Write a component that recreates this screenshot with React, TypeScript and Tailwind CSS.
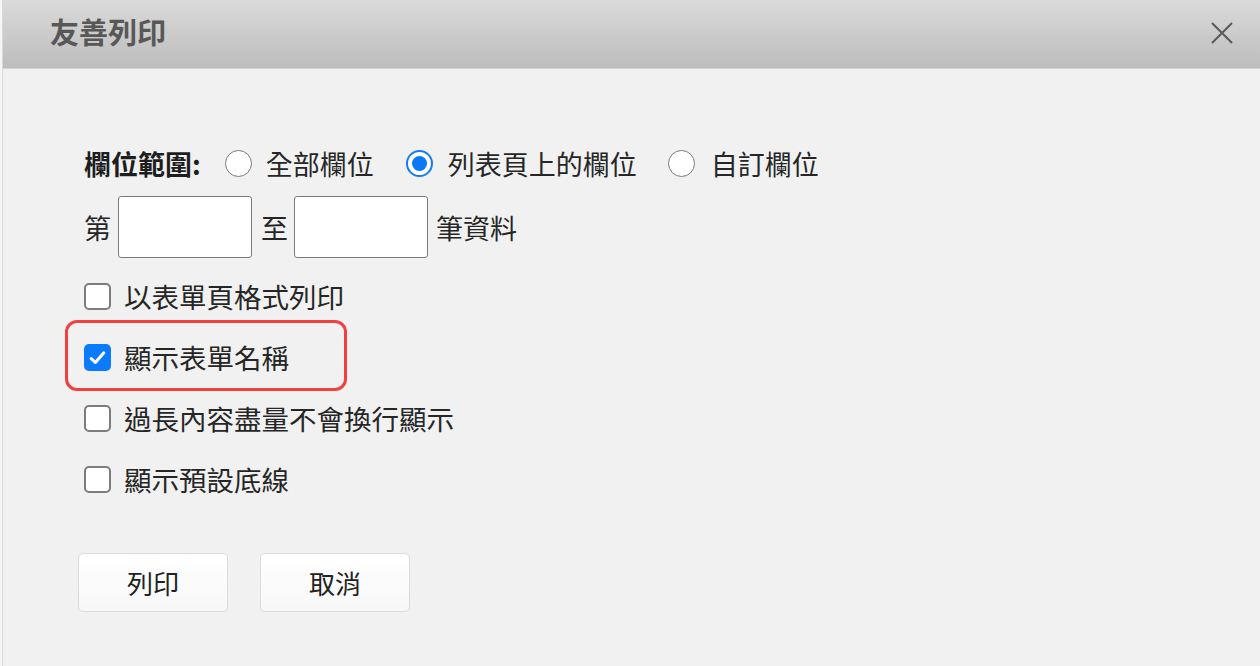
import React from "react";

const font = { fontFamily: '"Noto Sans CJK TC", "Noto Sans", sans-serif' };

function Radio({ checked }: { checked?: boolean }) {
  return checked ? (
    <span className="flex h-[27px] w-[27px] shrink-0 items-center justify-center rounded-full border-[2.5px] border-[#1779f6] bg-white">
      <span className="h-[15px] w-[15px] rounded-full bg-[#0d78f7]" />
    </span>
  ) : (
    <span className="h-[27px] w-[27px] shrink-0 rounded-full border-[1.5px] border-[#7a7a7a] bg-white" />
  );
}

function Checkbox({ checked }: { checked?: boolean }) {
  return checked ? (
    <span className="flex h-[27px] w-[27px] shrink-0 items-center justify-center rounded-[5px] bg-[#0b7bfb]">
      <svg width="21" height="21" viewBox="0 0 16 16" fill="none">
        <path d="M3.2 8.8 L6.4 11.8 L12.8 4.4" stroke="white" strokeWidth="2.3" strokeLinecap="round" strokeLinejoin="round" />
      </svg>
    </span>
  ) : (
    <span className="h-[27px] w-[27px] shrink-0 rounded-[5px] border-[2px] border-[#7c7c7c] bg-white" />
  );
}

function CheckRow({ label, checked, highlight }: { label: string; checked?: boolean; highlight?: boolean }) {
  return (
    <div className="relative flex h-[61px] items-center">
      <Checkbox checked={checked} />
      <span className="ml-[13px] text-[27.5px] leading-none text-[#262626]">{label}</span>
      {highlight && (
        <div className="pointer-events-none absolute left-[-19px] top-[-7px] h-[71px] w-[282px] rounded-[12px] border-[3px] border-[#f2403f]" />
      )}
    </div>
  );
}

function Button({ label }: { label: string }) {
  return (
    <button className="flex h-[59px] w-[150px] items-center justify-center rounded-[5px] border border-[#dcdcdc] bg-gradient-to-b from-white to-[#f7f7f7] text-[26px] leading-none text-[#222]">
      {label}
    </button>
  );
}

export default function App() {
  return (
    <div style={font} className="h-[666px] w-[1260px] overflow-hidden bg-[#f6f6f6] pl-[2px]">
      <div className="flex h-full flex-col border-l border-[#d9d9d9] bg-[#f1f1f1]">
        <div className="flex h-[69px] shrink-0 items-center justify-between border-b border-[#d4d4d4] bg-gradient-to-b from-[#dadada] to-[#bdbdbd] pl-[47px] pr-[26px]">
          <span className="pb-[6px] text-[29px] font-bold leading-none text-[#585858]">友善列印</span>
          <svg width="24" height="24" viewBox="0 0 24 24" className="mb-[2px]">
            <path d="M2 2 L22 22 M22 2 L2 22" stroke="#5a5a5a" strokeWidth="2" />
          </svg>
        </div>

        <div className="flex flex-col pl-[81px] pt-[74px]">
          <div className="flex h-[40px] items-center text-[27px] leading-none text-[#262626]">
            <span className="font-bold text-[#1e1e1e]">欄位範圍:</span>
            <span className="ml-[24px] flex items-center">
              <Radio />
              <span className="ml-[14px]">全部欄位</span>
            </span>
            <span className="ml-[32px] flex items-center">
              <Radio checked />
              <span className="ml-[15px]">列表頁上的欄位</span>
            </span>
            <span className="ml-[31px] flex items-center">
              <Radio />
              <span className="ml-[16px]">自訂欄位</span>
            </span>
          </div>

          <div className="mt-[13px] flex items-center text-[27px] leading-none text-[#262626]">
            <span>第</span>
            <input className="ml-[7px] h-[62px] w-[134px] rounded-[3px] border border-[#7a7a7a] bg-white outline-none" />
            <span className="ml-[9px]">至</span>
            <input className="ml-[6px] h-[62px] w-[134px] rounded-[3px] border border-[#7a7a7a] bg-white outline-none" />
            <span className="ml-[8px]">筆資料</span>
          </div>

          <div className="mt-[8px] flex flex-col">
            <CheckRow label="以表單頁格式列印" />
            <CheckRow label="顯示表單名稱" checked highlight />
            <CheckRow label="過長內容盡量不會換行顯示" />
            <CheckRow label="顯示預設底線" />
          </div>

          <div className="mt-[43px] -ml-[6px] flex gap-[32px]">
            <Button label="列印" />
            <Button label="取消" />
          </div>
        </div>
      </div>
    </div>
  );
}
